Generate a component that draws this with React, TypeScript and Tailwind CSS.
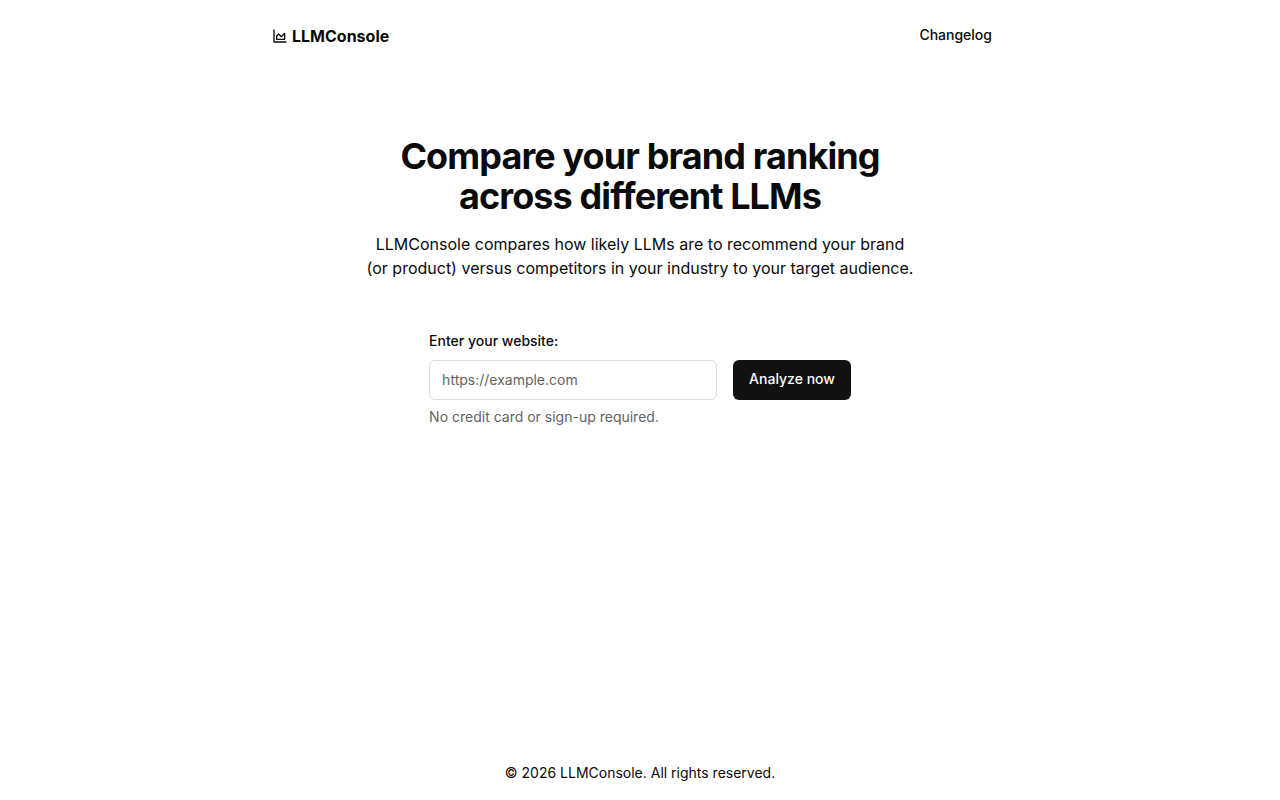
function AreaChartIcon() {
  return (
    <svg
      className="size-4"
      viewBox="0 0 24 24"
      fill="none"
      stroke="currentColor"
      strokeWidth={2}
      strokeLinecap="round"
      strokeLinejoin="round"
      aria-hidden="true"
    >
      <path d="M3 3v18h18" />
      <path d="M7 12v5h12V8l-5 5-4-4Z" />
    </svg>
  );
}

function Header() {
  return (
    <header className="flex items-center justify-between py-4">
      <a href="/" className="flex items-center gap-1 font-bold">
        <AreaChartIcon />
        LLMConsole
      </a>
      <nav className="flex items-center">
        <a href="/changelog" className="flex h-10 items-center px-4 pt-2 pb-2.5 text-sm font-medium">
          Changelog
        </a>
      </nav>
    </header>
  );
}

function AnalyzeForm() {
  return (
    <form className="mt-12 flex flex-col gap-2" onSubmit={(event) => event.preventDefault()}>
      <div>
        <label htmlFor="website" className="text-sm font-medium">
          Enter your website:
        </label>
      </div>
      <div className="flex flex-wrap gap-4 text-sm">
        <input
          id="website"
          type="url"
          placeholder="https://example.com"
          className="h-10 w-72 rounded-md border border-[#dcdcdc] bg-white px-3 pt-2 pb-2.5 placeholder:text-[#646464]"
        />
        <button type="submit" className="h-10 rounded-md bg-[#111111] px-4 pt-2 pb-2.5 font-medium text-[#fcfcfc]">
          Analyze now
        </button>
      </div>
      <p className="text-sm leading-[18px] text-[#646464]">No credit card or sign-up required.</p>
    </form>
  );
}

export default function App() {
  return (
    <div className="mx-auto flex min-h-screen max-w-3xl flex-col px-4 font-['Inter',sans-serif] text-[#0a0a0a]">
      <Header />
      <main className="flex flex-1 flex-col items-center pt-16">
        <h1 className="text-center text-4xl font-bold tracking-tight">
          Compare your brand ranking
          <br />
          across different LLMs
        </h1>
        <p className="mt-4 text-center">
          LLMConsole compares how likely LLMs are to recommend your brand
          <br />
          (or product) versus competitors in your industry to your target audience.
        </p>
        <AnalyzeForm />
      </main>
      <footer className="py-4 text-center">
        <span className="text-sm">© 2026 LLMConsole. All rights reserved.</span>
      </footer>
    </div>
  );
}
